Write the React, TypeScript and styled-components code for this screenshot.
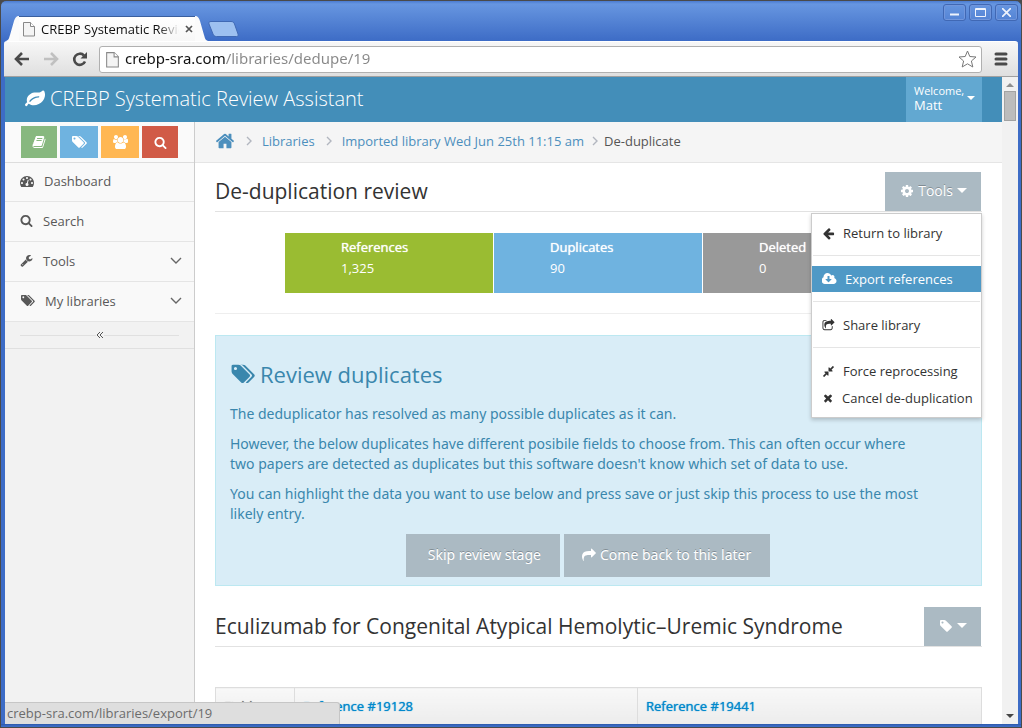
import React from 'react';
import styled, { createGlobalStyle, css } from 'styled-components';

const GlobalStyle = createGlobalStyle`
  * { box-sizing: border-box; }
  html, body, #root { height: 100%; }
  body { margin: 0; background: #4a4a4a; font: 13px/20px "Open Sans", sans-serif; color: #393939; overflow: hidden; }
  h1, h2, p, ul, ol { margin: 0; padding: 0; font-weight: 400; }
  ul, ol { list-style: none; }
  a { text-decoration: none; color: inherit; }
  button { font-family: inherit; border: 0; padding: 0; margin: 0; background: none; color: inherit; }
`;

/* ---------- icons ---------- */

const paths = {
  leaf: 'M1280 704q0-26-19-45t-45-19q-172 0-318 49.5t-259.5 134-235.5 219.5q-19 21-19 45 0 26 19 45t45 19q24 0 45-19 27-24 74-71t67-66q137-124 268.5-176t313.5-52q26 0 45-19t19-45zm512-198q0 95-20 193-46 224-184.5 383t-357.5 268q-214 108-438 108-148 0-286-47-15-5-88-42t-96-37q-16 0-39.5 32t-45 70-52.5 70-60 32q-43 0-63.5-17.5t-45.5-59.5q-2-4-6-11t-5.5-10-3-9.5-1.5-13.5q0-35 31-73.5t68-65.5 68-56 31-48q0-4-14-38t-16-44q-9-51-9-104 0-115 43.5-220t119-184.5 170.5-139 204-95.5q55-18 145-25.5t179.5-9 178.5-6 163.5-24 113.5-56.5l29.5-29.5 29.5-28 27-20 36.5-16 43.5-4.5q39 0 70.5 46t47.5 112 24 124 8 96z',
  search: 'M1216 832q0-185-131.5-316.5t-316.5-131.5-316.5 131.5-131.5 316.5 131.5 316.5 316.5 131.5 316.5-131.5 131.5-316.5zm512 832q0 52-38 90t-90 38q-54 0-90-38l-343-342q-179 124-399 124-143 0-273.5-55.5t-225-150-150-225-55.5-273.5 55.5-273.5 150-225 225-150 273.5-55.5 273.5 55.5 225 150 150 225 55.5 273.5q0 220-124 399l343 343q37 37 37 90z',
  home: 'M1472 992v480q0 26-19 45t-45 19h-384v-384h-256v384h-384q-26 0-45-19t-19-45v-480q0-1 .5-3t.5-3l575-474 575 474q1 2 1 6zm223-69l-62 74q-8 9-21 11h-3q-13 0-21-7l-692-577-692 577q-12 8-24 7-13-2-21-11l-62-74q-8-10-7-23.5t11-21.5l719-599q32-26 76-26t76 26l244 204v-195q0-14 9-23t23-9h192q14 0 23 9t9 23v408l219 182q10 8 11 21.5t-7 23.5z',
  tags: 'M576 448q0-53-37.5-90.5t-90.5-37.5-90.5 37.5-37.5 90.5 37.5 90.5 90.5 37.5 90.5-37.5 37.5-90.5zm1067 576q0 53-37 90l-491 492q-39 37-91 37-53 0-90-37l-715-716q-38-37-64.5-101t-26.5-117v-416q0-52 38-90t90-38h416q53 0 117 26.5t102 64.5l715 714q37 39 37 91zm384 0q0 53-37 90l-491 492q-39 37-91 37-36 0-59-14t-53-45l470-470q37-37 37-90 0-52-37-91l-715-714q-38-38-102-64.5t-117-26.5h224q53 0 117 26.5t102 64.5l715 714q37 39 37 91z',
  tag: 'M576 448q0-53-37.5-90.5t-90.5-37.5-90.5 37.5-37.5 90.5 37.5 90.5 90.5 37.5 90.5-37.5 37.5-90.5zm1067 576q0 53-37 90l-491 492q-39 37-91 37-53 0-90-37l-715-716q-38-37-64.5-101t-26.5-117v-416q0-52 38-90t90-38h416q53 0 117 26.5t102 64.5l715 714q37 39 37 91z',
  share: 'M1792 640q0 26-19 45l-512 512q-19 19-45 19t-45-19-19-45v-256h-224q-98 0-175.5 6t-154 21.5-133 42.5-105.5 69.5-80 101-48.5 138.5-17.5 181q0 55 5 123 0 6 2.5 23.5t2.5 26.5q0 15-8.5 25t-23.5 10q-16 0-28-17-7-9-13-22t-13.5-30-10.5-24q-127-285-127-451 0-199 53-333 162-403 875-403h224v-256q0-26 19-45t45-19 45 19l512 512q19 19 19 45z',
  cog: 'M1152 896q0-106-75-181t-181-75-181 75-75 181 75 181 181 75 181-75 75-181zm512-109v222q0 12-8 23t-20 13l-185 28q-19 54-39 91 35 50 107 138 10 12 10 25t-9 23q-27 37-99 108t-94 71q-12 0-26-9l-138-108q-44 23-91 38-16 136-29 186-7 28-36 28h-222q-14 0-24.5-8.5t-11.5-21.5l-28-184q-49-16-90-37l-141 107q-10 9-25 9-14 0-25-11-126-114-165-168-7-10-7-23 0-12 8-23 15-21 51-66.5t54-70.5q-27-50-41-99l-183-27q-13-2-21-12.5t-8-23.5v-222q0-12 8-23t19-13l186-28q14-46 39-92-40-57-107-138-10-12-10-24 0-10 9-23 26-36 98.5-107.5t94.5-71.5q13 0 26 10l138 107q44-23 91-38 16-136 29-186 7-28 36-28h222q14 0 24.5 8.5t11.5 21.5l28 184q49 16 90 37l142-107q9-9 24-9 13 0 25 10 129 119 165 170 7 8 7 22 0 12-8 23-15 21-51 66.5t-54 70.5q26 50 41 98l183 28q13 2 21 12.5t8 23.5z',
  wrench: 'M448 1472q0-26-19-45t-45-19-45 19-19 45 19 45 45 19 45-19 19-45zm644-420l-682 682q-37 37-90 37-52 0-91-37l-106-108q-38-36-38-90 0-53 38-91l681-681q39 98 114.5 173.5t173.5 114.5zm634-435q0 39-23 106-47 134-164.5 217.5t-258.5 83.5q-185 0-316.5-131.5t-131.5-316.5 131.5-316.5 316.5-131.5q58 0 121.5 16.5t107.5 46.5q16 11 16 28t-16 28l-293 169v224l193 107q5-3 79-48.5t135.5-81 70.5-35.5q15 0 23.5 10t8.5 25z',
  dashboard: 'M384 1152q0-53-37.5-90.5t-90.5-37.5-90.5 37.5-37.5 90.5 37.5 90.5 90.5 37.5 90.5-37.5 37.5-90.5zm192-448q0-53-37.5-90.5t-90.5-37.5-90.5 37.5-37.5 90.5 37.5 90.5 90.5 37.5 90.5-37.5 37.5-90.5zm428 481l101-382q6-26-7.5-48.5t-38.5-29.5-48 6.5-30 39.5l-101 382q-60 5-107 43.5t-63 98.5q-20 77 20 146t117 89 146-20 89-117q16-60-6-117t-72-91zm660-33q0-53-37.5-90.5t-90.5-37.5-90.5 37.5-37.5 90.5 37.5 90.5 90.5 37.5 90.5-37.5 37.5-90.5zm-640-640q0-53-37.5-90.5t-90.5-37.5-90.5 37.5-37.5 90.5 37.5 90.5 90.5 37.5 90.5-37.5 37.5-90.5zm448 192q0-53-37.5-90.5t-90.5-37.5-90.5 37.5-37.5 90.5 37.5 90.5 90.5 37.5 90.5-37.5 37.5-90.5zm320 448q0 261-141 483-19 29-54 29h-1402q-35 0-54-29-141-221-141-483 0-182 71-348t191-286 286-191 348-71 348 71 286 191 191 286 71 348z',
  arrowLeft: 'M1664 896v128q0 53-32.5 90.5t-84.5 37.5h-704l293 294q38 36 38 90t-38 90l-75 76q-37 37-90 37-52 0-91-37l-651-652q-37-37-37-90 0-52 37-91l651-650q38-38 91-38 52 0 90 38l75 74q38 38 38 91t-38 91l-293 293h704q52 0 84.5 37.5t32.5 90.5z',
  times: 'M1490 1322q0 40-28 68l-136 136q-28 28-68 28t-68-28l-294-294-294 294q-28 28-68 28t-68-28l-136-136q-28-28-28-68t28-68l294-294-294-294q-28-28-28-68t28-68l136-136q28-28 68-28t68 28l294 294 294-294q28-28 68-28t68 28l136 136q28 28 28 68t-28 68l-294 294 294 294q28 28 28 68z',
  compress: 'M896 960v448q0 26-19 45t-45 19-45-19l-144-144-332 332q-10 10-23 10t-23-10l-114-114q-10-10-10-23t10-23l332-332-144-144q-19-19-19-45t19-45 45-19h448q26 0 45 19t19 45zm755-672q0 13-10 23l-332 332 144 144q19 19 19 45t-19 45-45 19h-448q-26 0-45-19t-19-45v-448q0-26 19-45t45-19 45 19l144 144 332-332q10-10 23-10t23 10l114 114q10 10 10 23z',
  shareSquare: 'M1472 989v259q0 119-84.5 203.5t-203.5 84.5h-832q-119 0-203.5-84.5t-84.5-203.5v-832q0-119 84.5-203.5t203.5-84.5h255q13 0 22.5 9.5t9.5 22.5q0 27-26 32-77 26-133 60-10 4-16 4h-112q-66 0-113 47t-47 113v832q0 66 47 113t113 47h832q66 0 113-47t47-113v-214q0-19 18-29 28-13 54-37 16-16 35-8 21 9 21 29zm237-496l-384 384q-18 19-45 19-12 0-25-5-39-17-39-59v-192h-160q-323 0-438 131-119 137-74 473 3 23-20 34-8 2-12 2-16 0-26-13-10-14-21-31t-39.5-68.5-49.5-99.5-38.5-114-17.5-122q0-49 3.5-91t14-90 28-88 47-81.5 68.5-74 94.5-61.5 124.5-48.5 159.5-30.5 196.5-11h160v-192q0-42 39-59 13-5 25-5 26 0 45 19l384 384q19 19 19 45t-19 45z',
  cloud: 'M1216 928q0-14-9-23t-23-9h-224v-352q0-13-9.5-22.5t-22.5-9.5h-192q-13 0-22.5 9.5t-9.5 22.5v352h-224q-13 0-22.5 9.5t-9.5 22.5q0 14 9 23l352 352q9 9 23 9t23-9l351-351q10-12 10-24zm640 224q0 159-112.5 271.5t-271.5 112.5h-1088q-185 0-316.5-131.5t-131.5-316.5q0-130 70-240t188-165q-2-30-2-43 0-212 150-362t362-150q156 0 285.5 87t188.5 231q71-62 166-62 106 0 181 75t75 181q0 76-41 138 130 31 213.5 135.5t83.5 238.5z',
  book: 'M1703 478q40 57 18 129l-275 906q-19 64-76.5 107.5t-122.5 43.5h-923q-77 0-148.5-53.5t-99.5-131.5q-24-67-2-127 0-4 3-27t4-37q1-8-3-21.5t-3-19.5q2-11 8-21t16.5-23.5 16.5-23.5q23-38 45-91.5t30-91.5q3-10 .5-30t-.5-28q3-11 17-28t17-23q21-36 42-92t25-90q1-9-2.5-32t.5-28q4-13 22-30.5t22-22.5q19-26 42.5-84.5t27.5-96.5q1-8-3-25.5t-2-26.5q2-8 9-18t18-23 17-21q8-12 16.5-30.5t15-35 16-36 19.5-32 26.5-23.5 36-11.5 47.5 5.5l-1 3q38-9 51-9h761q74 0 114 56t18 130l-274 906q-36 119-71.5 153.5t-128.5 34.5h-869q-27 0-38 15-11 16-1 43 24 70 144 70h923q29 0 56-15.5t35-41.5l300-987q7-22 5-57 38 15 59 43zm-1064 2q-4 13 2 22.5t20 9.5h608q13 0 25.5-9.5t16.5-22.5l21-64q4-13-2-22.5t-20-9.5h-608q-13 0-25.5 9.5t-16.5 22.5zm-83 256q-4 13 2 22.5t20 9.5h608q13 0 25.5-9.5t16.5-22.5l21-64q4-13-2-22.5t-20-9.5h-608q-13 0-25.5 9.5t-16.5 22.5z',
  users: 'M593 896q-162 5-265 128h-134q-82 0-138-40.5t-56-118.5q0-353 124-353 6 0 43.5 21t97.5 42.5 119 21.5q67 0 133-23-5 37-5 66 0 159 93 294zm1071 637q0 120-73 189.5t-194 69.5h-874q-121 0-194-69.5t-73-189.5q0-53 3.5-103.5t14-109 26.5-108.5 43-97.5 62-81 85.5-53.5 111.5-20q10 0 43 21.5t73 48 107 48 135 21.5 135-21.5 107-48 73-48 43-21.5q61 0 111.5 20t85.5 53.5 62 81 43 97.5 26.5 108.5 14 109 3.5 103.5zm-1024-1277q0 106-75 181t-181 75-181-75-75-181 75-181 181-75 181 75 75 181zm704 384q0 159-112.5 271.5t-271.5 112.5-271.5-112.5-112.5-271.5 112.5-271.5 271.5-112.5 271.5 112.5 112.5 271.5zm576 225q0 78-56 118.5t-138 40.5h-134q-103-123-265-128 93-135 93-294 0-29-5-66 66 23 133 23 59 0 119-21.5t97.5-42.5 43.5-21q124 0 124 353zm-128-609q0 106-75 181t-181 75-181-75-75-181 75-181 181-75 181 75 75 181z',
};
type IconName = keyof typeof paths;
const wide: Partial<Record<IconName, number>> = { tags: 2048, users: 1920, cloud: 1920 };

const Glyph = styled.svg`
  display: block;
  flex: none;
  fill: currentColor;
`;

function Icon({ name, size = 14 }: { name: IconName; size?: number }) {
  const w = wide[name] ?? 1792;
  return (
    <Glyph viewBox={`0 0 ${w} 1792`} width={Math.round((size * w) / 1792)} height={size} aria-hidden="true">
      <path d={paths[name]} />
    </Glyph>
  );
}

const Caret = styled.span`
  display: block;
  flex: none;
  border: 5px solid transparent;
  border-top-color: #fff;
  border-bottom: 0;
`;

/* ---------- browser window ---------- */

const Window = styled.div`
  height: 100%;
  display: flex;
  flex-direction: column;
  border-radius: 6px 6px 0 0;
  border: 1px solid #4a4a4a;
  border-bottom: 0;
  background: linear-gradient(#4a7bd0, #6796e0 3px, #3d6cc6 40px);
  overflow: hidden;
`;

const TitleBar = styled.div`
  display: flex;
  height: 40px;
  padding: 0 3px 0 5px;
  align-items: flex-end;
`;

const Tab = styled.div`
  display: flex;
  height: 25px;
`;

const TabBody = styled.div`
  display: flex;
  align-items: center;
  gap: 6px;
  width: 176px;
  padding-left: 4px;
  background: linear-gradient(#fff, #f7f7f7);
  border-top: 1px solid #3a5f9e;
  color: #111;
`;

const TabLabel = styled.span`
  width: 138px;
  overflow: hidden;
  white-space: nowrap;
  mask-image: linear-gradient(90deg, #000 118px, transparent 138px);
`;

const IconButton = styled.button`
  display: flex;
  align-items: center;
  justify-content: center;
  flex: none;
`;

const NewTab = styled(IconButton)`
  align-self: flex-end;
  padding-bottom: 4px;
`;

const WindowControls = styled.div`
  display: flex;
  gap: 3px;
  margin-left: auto;
  align-self: flex-start;
  padding-top: 3px;
`;

const ControlButton = styled(IconButton)`
  width: 23px;
  height: 17px;
  border: 1px solid #4068b4;
  border-radius: 3px;
  box-shadow: inset 0 0 0 1px #7196dc;
  color: #eef3fc;
`;

const Toolbar = styled.div`
  display: flex;
  align-items: center;
  height: 36px;
  margin: 0 3px;
  padding: 0 9px 0 8px;
  border-top: 1px solid #fff;
  border-bottom: 1px solid #a0a0a0;
  border-radius: 3px 3px 0 0;
  background: linear-gradient(#f7f7f7, #dfdfdf);
`;

const NavButton = styled(IconButton)`
  width: 20px;
  height: 20px;
  margin-right: 9px;
`;

const AddressBar = styled.label`
  display: flex;
  flex: 1;
  align-items: center;
  gap: 6px;
  height: 27px;
  padding: 0 4px 0 6px;
  border: 1px solid #b0b0b0;
  border-radius: 3px;
  background: #fff;
`;

const AddressInput = styled.input`
  flex: 1;
  min-width: 0;
  height: 25px;
  padding: 0 0 2px;
  border: 0;
  outline: 0;
  font: 15px/22px "Noto Sans", "Open Sans", sans-serif;
  color: transparent;
  background: linear-gradient(90deg, #111 101px, #888 101px) text;
`;

const Viewport = styled.div`
  position: relative;
  display: flex;
  flex: 1;
  min-height: 0;
  margin: 0 3px 0 4px;
  background: #fff;
`;

const WindowBase = styled.div`
  flex: none;
  height: 4px;
  background: linear-gradient(#2b57a8, #3c6cc6 2px, #3c6cc6 3px, #4a4a4a 3px);
`;

const StatusBubble = styled.output`
  position: absolute;
  left: 0;
  bottom: 0;
  width: 335px;
  height: 22px;
  padding: 0 2px;
  border: 1px solid #c6c6c6;
  border-width: 1px 1px 0 0;
  border-radius: 0 3px 0 0;
  background: #dedede;
  color: #6c6c6c;
  line-height: 21px;
`;

const ScrollTrack = styled.div`
  display: flex;
  flex-direction: column;
  align-items: center;
  flex: none;
  width: 16px;
  padding: 6px 1px;
  background: #f1f1f1;
`;

const ScrollThumb = styled.div`
  width: 12px;
  height: 30px;
  margin: 4px 0 auto;
  border: 1px solid #a2a2a2;
  background: #bcbcbc;
`;

const ScrollArrow = styled.span<{ $up?: boolean }>`
  border: 4px solid transparent;
  ${({ $up }) =>
    $up
      ? css`border-bottom-color: #8f8f8f; border-top: 0;`
      : css`border-top-color: #454545; border-bottom: 0;`}
`;

/* ---------- site ---------- */

const Site = styled.div`
  display: flex;
  flex-direction: column;
  flex: 1;
  min-width: 0;
  overflow: hidden;
`;

const SiteHeader = styled.header`
  display: flex;
  flex: none;
  justify-content: space-between;
  height: 45px;
  padding: 0 20px;
  background: #438eb9;
  color: #fff;
`;

const Brand = styled.a`
  display: flex;
  align-items: center;
  gap: 5px;
  font-size: 20px;
  font-weight: 300;
  padding-bottom: 2px;
`;

const UserMenu = styled.button`
  display: flex;
  align-items: center;
  justify-content: space-between;
  width: 76px;
  padding: 0 7px 3px 8px;
  background: #62a8d1;
  text-align: left;
  font-size: 13px;
  line-height: 14px;

  small { display: block; font-size: 11px; }
  ${Caret} { border-width: 4px; border-bottom-width: 0; }
`;

const Columns = styled.div`
  display: flex;
  flex: 1;
  min-height: 0;
`;

const Sidebar = styled.nav`
  flex: none;
  width: 190px;
  background: #f2f2f2;
  border-right: 1px solid #ccc;
`;

const Shortcuts = styled.div`
  display: flex;
  justify-content: center;
  gap: 3px;
  height: 41px;
  padding-top: 4px;
  background: #fafafa;
  border-bottom: 1px solid #ddd;
`;

const Shortcut = styled.button<{ $color: string; $width: number }>`
  display: flex;
  align-items: center;
  justify-content: center;
  width: ${({ $width }) => $width}px;
  height: 32px;
  background: ${({ $color }) => $color};
  color: #fff;
`;

const MenuItem = styled.a`
  display: flex;
  align-items: center;
  gap: 10px;
  height: 40px;
  padding: 0 12px 2px 15px;
  background: #f9f9f9;
  border-bottom: 1px solid #e5e5e5;
  color: #585858;

  li:first-child > & { height: 39px; }
`;

const Chevron = styled.svg`
  margin-left: auto;
  fill: none;
  stroke: #666;
  stroke-width: 1.4;
`;

const Collapse = styled.div`
  display: flex;
  align-items: center;
  height: 27px;
  padding: 0 15px;
  border-bottom: 1px solid #e0e0e0;

  &::before, &::after { content: ""; flex: 1; height: 1px; background: #e0e0e0; }
`;

const Main = styled.main`
  flex: 1;
  min-width: 0;
`;

const Breadcrumbs = styled.ol`
  display: flex;
  align-items: center;
  height: 41px;
  padding: 0 20px 2px;
  background: #f5f5f5;
  border-bottom: 1px solid #e5e5e5;
  color: #4c8fbd;

  li { display: flex; align-items: center; }
  li[aria-current] { color: #555; }
`;

const Separator = styled.svg<{ $tight?: boolean }>`
  margin: 0 ${({ $tight }) => ($tight ? 6 : 10)}px 0 ${({ $tight }) => ($tight ? 8 : 11)}px;
  fill: none;
  stroke: #b2b6bf;
  stroke-width: 1.4;
`;

const Content = styled.div`
  padding: 9px 20px 0;
`;

const PageHeader = styled.div`
  display: flex;
  align-items: flex-start;
  justify-content: space-between;
  height: 40px;
  padding-right: 1px;
  border-bottom: 1px solid #e2e2e2;
`;

const Title = styled.h1`
  font-size: 21px;
  line-height: 38px;
  color: #333;
`;

const MenuAnchor = styled.div`
  position: relative;
`;

const Button = styled.button`
  display: flex;
  align-items: center;
  gap: 4px;
  height: 39px;
  padding: 0 14px 2px 15px;
  background: #abbac3;
  color: #fff;
  font-size: 14px;
  text-shadow: 0 -1px 0 rgba(0, 0, 0, 0.25);
`;

const TallButton = styled(Button)`
  height: 43px;
  padding: 0 19px 2px 18px;
  font-family: "Noto Sans", "Open Sans", sans-serif;
`;

const Dropdown = styled.ul`
  position: absolute;
  z-index: 2;
  top: 41px;
  right: -1px;
  width: 171px;
  padding: 6px 0;
  border: 1px solid #ccc;
  background: #fff;
  box-shadow: 0 2px 4px rgba(0, 0, 0, 0.2);
`;

const DropdownItem = styled.a<{ $active?: boolean }>`
  display: flex;
  align-items: center;
  gap: 8px;
  height: 26px;
  padding: 0 10px;
  white-space: nowrap;
  background: ${({ $active }) => ($active ? '#4f99c6' : 'transparent')};
  color: ${({ $active }) => ($active ? '#fff' : '#333')};

  li + li > & { margin-top: 1px; }
`;

const DropdownDivider = styled.li`
  height: 1px;
  margin: 9px 1px 10px;
  background: #e5e5e5;
`;

const Stats = styled.dl`
  display: flex;
  gap: 1px;
  margin: 21px 0 20px;
  padding-left: 70px;
`;

const Stat = styled.div<{ $color: string }>`
  width: 208px;
  height: 60px;
  padding: 4px 0 0 56px;
  background: ${({ $color }) => $color};
  color: #fff;

  dt { text-shadow: 0 0 1px currentColor; line-height: 20px; }
  dd { margin: 0; line-height: 22px; }
`;

const Rule = styled.hr`
  margin: 0 0 21px;
  border: 0;
  border-top: 1px solid #eee;
`;

const Notice = styled.section`
  padding: 22px 35px 8px 14px;
  border: 1px solid #bce8f1;
  background: #d9edf7;
  color: #3a87ad;
  font: 14px/20px "Noto Sans", "Open Sans", sans-serif;

  p { margin-bottom: 10px; padding-right: 16px; }
`;

const NoticeTitle = styled.h2`
  display: flex;
  align-items: center;
  gap: 5px;
  margin-bottom: 14px;
  font: 22px/32px "Open Sans", sans-serif;
`;

const Actions = styled.div`
  display: flex;
  justify-content: center;
  gap: 4px;
`;

const Entry = styled.article`
  margin-top: 21px;
`;

const CompareTable = styled.table`
  width: 100%;
  margin-top: 40px;
  border-collapse: collapse;
  table-layout: fixed;

  th {
    height: 37px;
    padding: 0 8px;
    border: 1px solid #ddd;
    background: linear-gradient(#f8f8f8, #ececec);
    text-align: left;
    font-weight: 400;
    text-shadow: 0 0 1px currentColor;
    color: #707070;
  }
  th:first-child { width: 79px; }
  th:nth-child(2) { width: 343px; }
  a { color: #08c; text-shadow: 0 0 1px currentColor; }
`;

const PageIcon = ({ size = 16 }: { size?: number }) => (
  <svg width={size - 4} height={size} viewBox="0 0 12 16" aria-hidden="true">
    <path d="M.5 1.5h7l4 4v9.500h-11z" fill="#f4f4f4" stroke="#888" />
    <path d="M7.500 1.500v4h4" fill="#fff" stroke="#888" />
  </svg>
);

function App() {
  return (
    <>
      <GlobalStyle />
      <Window>
        <TitleBar>
          <Tab>
            <svg width="13" height="25" viewBox="0 0 13 25" aria-hidden="true">
              <path d="M0 25c3-1 3-3 4-6l4-14c1-3 2-5 5-5v25z" fill="#fbfbfb" />
            </svg>
            <TabBody>
              <PageIcon />
              <TabLabel>CREBP Systematic Review</TabLabel>
              <IconButton aria-label="Close tab">
                <svg width="8" height="8" viewBox="0 0 8 8" aria-hidden="true">
                  <path d="M1 1l6 6M7 1L1 7" stroke="#555" strokeWidth="1.700" />
                </svg>
              </IconButton>
            </TabBody>
            <svg width="13" height="25" viewBox="0 0 13 25" aria-hidden="true">
              <path d="M13 25c-3-1-3-3-4-6L5 5C4 2 3 0 0 0v25z" fill="#fbfbfb" />
            </svg>
          </Tab>
          <NewTab aria-label="New tab">
            <svg width="32" height="16" viewBox="0 0 32 16" aria-hidden="true">
              <path d="M3 .5h20c2 0 3 1 3.500 2.500l3.500 10c.5 1.500 0 2.500-1.500 2.500h-20c-2 0-3-1-3.500-2.500L1 3C.5 1.500 1 .5 3 .5z" fill="#9dc0f0" stroke="#4069b4" />
            </svg>
          </NewTab>
          <WindowControls>
            <ControlButton aria-label="Minimize">
              <svg width="11" height="9" viewBox="0 0 11 9" aria-hidden="true"><path d="M1 6.500h9" stroke="currentColor" strokeWidth="2" /></svg>
            </ControlButton>
            <ControlButton aria-label="Maximize">
              <svg width="11" height="9" viewBox="0 0 11 9" aria-hidden="true"><path d="M.5.5h10v8h-10zM1 1.500h9" fill="none" stroke="currentColor" /></svg>
            </ControlButton>
            <ControlButton aria-label="Close">
              <svg width="9" height="9" viewBox="0 0 9 9" aria-hidden="true"><path d="M0 0l9 9M9 0L0 9" stroke="currentColor" strokeWidth="1.700" /></svg>
            </ControlButton>
          </WindowControls>
        </TitleBar>

        <Toolbar>
          <NavButton aria-label="Back">
            <svg width="16" height="14" viewBox="0 0 16 14" fill="none" stroke="#4a4a4a" strokeWidth="2.600" aria-hidden="true"><path d="M2 7h13M8 1L2 7l6 6" /></svg>
          </NavButton>
          <NavButton aria-label="Forward">
            <svg width="16" height="14" viewBox="0 0 16 14" fill="none" stroke="#c0c0c0" strokeWidth="2.600" aria-hidden="true"><path d="M14 7H1M8 1l6 6-6 6" /></svg>
          </NavButton>
          <NavButton aria-label="Reload">
            <svg width="16" height="16" viewBox="0 0 16 16" aria-hidden="true">
              <path d="M12 4.500A5.600 5.600 0 1 0 13 10.500" fill="none" stroke="#4a4a4a" strokeWidth="2.600" />
              <path d="M15 1v6.500H8.500z" fill="#4a4a4a" />
            </svg>
          </NavButton>
          <AddressBar>
            <PageIcon size={17} />
            <AddressInput aria-label="Address" defaultValue="crebp-sra.com/libraries/dedupe/19" />
            <IconButton aria-label="Bookmark this page">
              <svg width="19" height="18" viewBox="0 0 19 18" aria-hidden="true">
                <path d="M9.500 1l2.300 5.500 6.200.5-4.600 4 1.400 6-5.300-3.200L4.200 17l1.400-6L1 7l6.200-.5z" fill="#fff" stroke="#777" strokeLinejoin="round" />
              </svg>
            </IconButton>
          </AddressBar>
          <IconButton aria-label="Browser menu">
            <svg width="27" height="14" viewBox="0 0 27 14" aria-hidden="true">
              <path d="M14 2h10M14 7h10M14 12h10" stroke="#4a4a4a" strokeWidth="3" strokeLinecap="round" />
            </svg>
          </IconButton>
        </Toolbar>

        <Viewport>
          <Site>
            <SiteHeader>
              <Brand href="#"><Icon name="leaf" size={20} />CREBP Systematic Review Assistant</Brand>
              <UserMenu>
                <span><small>Welcome,</small>Matt</span>
                <Caret />
              </UserMenu>
            </SiteHeader>
            <Columns>
              <Sidebar>
                <Shortcuts>
                  <Shortcut $color="#87b87f" $width={36} aria-label="Libraries"><Icon name="book" /></Shortcut>
                  <Shortcut $color="#6fb3e0" $width={38} aria-label="Tags"><Icon name="tags" /></Shortcut>
                  <Shortcut $color="#ffb752" $width={38} aria-label="Users"><Icon name="users" /></Shortcut>
                  <Shortcut $color="#d15b47" $width={36} aria-label="Search"><Icon name="search" size={13} /></Shortcut>
                </Shortcuts>
                <ul>
                  <li><MenuItem href="#"><Icon name="dashboard" />Dashboard</MenuItem></li>
                  <li><MenuItem href="#"><Icon name="search" size={13} />Search</MenuItem></li>
                  <li>
                    <MenuItem href="#">
                      <Icon name="wrench" size={13} />Tools
                      <Chevron width="12" height="8" viewBox="0 0 12 8"><path d="M1 1l5 5 5-5" /></Chevron>
                    </MenuItem>
                  </li>
                  <li>
                    <MenuItem href="#">
                      <Icon name="tags" size={13} />My libraries
                      <Chevron width="12" height="8" viewBox="0 0 12 8"><path d="M1 1l5 5 5-5" /></Chevron>
                    </MenuItem>
                  </li>
                </ul>
                <Collapse>
                  <IconButton aria-label="Collapse sidebar">
                    <svg width="8" height="8" viewBox="0 0 8 8" aria-hidden="true">
                      <path d="M4 1L1 4l3 3M7 1L4 4l3 3" fill="none" stroke="#555" />
                    </svg>
                  </IconButton>
                </Collapse>
              </Sidebar>

              <Main>
                <Breadcrumbs>
                  <li><a href="#" aria-label="Home"><Icon name="home" size={20} /></a></li>
                  <li><Separator width="6" height="10" viewBox="0 0 6 10"><path d="M1 1l4 4-4 4" /></Separator><a href="#">Libraries</a></li>
                  <li><Separator width="6" height="10" viewBox="0 0 6 10"><path d="M1 1l4 4-4 4" /></Separator><a href="#">Imported library Wed Jun 25th 11:15 am</a></li>
                  <li aria-current="page"><Separator $tight width="6" height="10" viewBox="0 0 6 10"><path d="M1 1l4 4-4 4" /></Separator>De-duplicate</li>
                </Breadcrumbs>
                <Content>
                  <PageHeader>
                    <Title>De-duplication review</Title>
                    <MenuAnchor>
                      <Button aria-expanded="true"><Icon name="cog" />Tools <Caret /></Button>
                      <Dropdown>
                        <li><DropdownItem href="#"><Icon name="arrowLeft" size={13} />Return to library</DropdownItem></li>
                        <DropdownDivider role="separator" />
                        <li><DropdownItem href="#" $active><Icon name="cloud" size={14} />Export references</DropdownItem></li>
                        <DropdownDivider role="separator" />
                        <li><DropdownItem href="#"><Icon name="shareSquare" size={13} />Share library</DropdownItem></li>
                        <DropdownDivider role="separator" />
                        <li><DropdownItem href="#"><Icon name="compress" size={13} />Force reprocessing</DropdownItem></li>
                        <li><DropdownItem href="#"><Icon name="times" size={12} />Cancel de-duplication</DropdownItem></li>
                      </Dropdown>
                    </MenuAnchor>
                  </PageHeader>

                  <Stats>
                    <Stat $color="#9abc32"><dt>References</dt><dd>1,325</dd></Stat>
                    <Stat $color="#6fb3e0"><dt>Duplicates</dt><dd>90</dd></Stat>
                    <Stat $color="#999999"><dt>Deleted</dt><dd>0</dd></Stat>
                  </Stats>
                  <Rule />

                  <Notice>
                    <NoticeTitle><Icon name="tags" size={22} />Review duplicates</NoticeTitle>
                    <p>The deduplicator has resolved as many possible duplicates as it can.</p>
                    <p>However, the below duplicates have different posibile fields to choose from. This can often occur where two papers are detected as duplicates but this software doesn't know which set of data to use.</p>
                    <p>You can highlight the data you want to use below and press save or just skip this process to use the most likely entry.</p>
                    <Actions>
                      <TallButton><i />Skip review stage</TallButton>
                      <TallButton><Icon name="share" />Come back to this later</TallButton>
                    </Actions>
                  </Notice>

                  <Entry>
                    <PageHeader>
                      <Title as="h2">Eculizumab for Congenital Atypical Hemolytic–Uremic Syndrome</Title>
                      <Button aria-label="Tag"><Icon name="tag" /><Caret /></Button>
                    </PageHeader>
                    <CompareTable>
                      <thead>
                        <tr>
                          <th scope="col">Field</th>
                          <th scope="col"><a href="#">Reference #19128</a></th>
                          <th scope="col"><a href="#">Reference #19441</a></th>
                        </tr>
                      </thead>
                    </CompareTable>
                  </Entry>
                </Content>
              </Main>
            </Columns>
          </Site>
          <ScrollTrack>
            <ScrollArrow $up />
            <ScrollThumb />
            <ScrollArrow />
          </ScrollTrack>
          <StatusBubble>crebp-sra.com/libraries/export/19</StatusBubble>
        </Viewport>
        <WindowBase />
      </Window>
    </>
  );
}

export default App;
